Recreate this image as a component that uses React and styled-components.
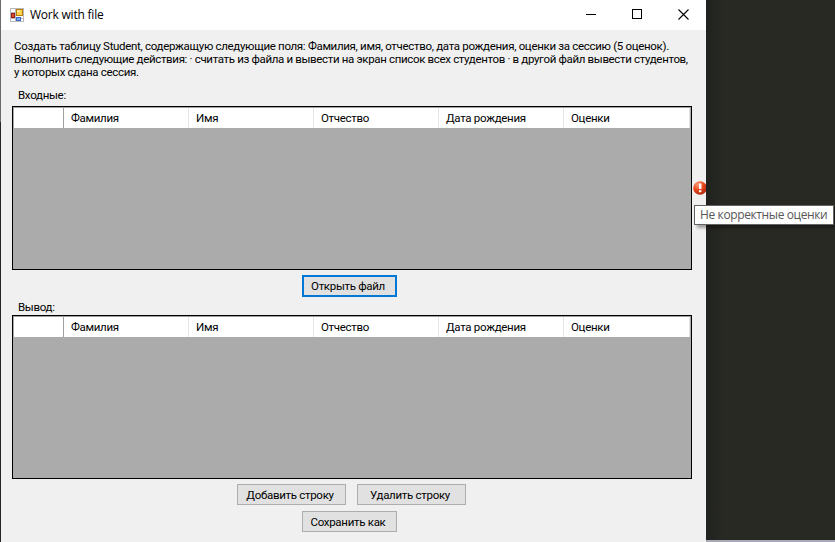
import React from "react";
import styled, { createGlobalStyle } from "styled-components";

const GlobalStyle = createGlobalStyle`
  * { box-sizing: border-box; }
  body { margin: 0; overflow: hidden; }
`;

const Desktop = styled.div`
  position: relative;
  display: flex;
  width: 835px;
  height: 542px;
  background: #282923;
  font-family: Roboto, "Liberation Sans", sans-serif;
  font-size: 11.5px;
  color: #000;
`;

const LeftEdge = styled.div`
  width: 1px;
  background: linear-gradient(#6b6b6b 0 122px, #25252a 122px);
`;

const Window = styled.main`
  display: flex;
  flex-direction: column;
  width: 705px;
  height: 542px;
  background: #f0f0f0;
`;

const Backdrop = styled.div`
  flex: 1;
  background: linear-gradient(90deg, #20221f, #282923 18px);
  border-bottom: 2px solid #a9a9b5;
`;

const TitleBar = styled.header`
  display: flex;
  align-items: center;
  height: 30px;
  padding-left: 9px;
  background: #fff;
`;

const Title = styled.h1`
  flex: 1;
  margin: 0 0 0 5px;
  font: 400 12px/16px "Open Sans", "Noto Sans", sans-serif;
  letter-spacing: -0.22px;
`;

const WindowButton = styled.button`
  display: flex;
  align-items: center;
  justify-content: center;
  width: 46px;
  height: 30px;
  padding: 0 0 2px;
  border: 0;
  background: none;
`;

const Line = styled.span`
  display: block;
  white-space: pre;
  letter-spacing: ${(p) => p.$spacing ?? -0.3}px;
`;

const Description = styled.p`
  height: 42px;
  margin: 10px 0 0 13px;
  line-height: 13px;
`;

const Label = styled.div`
  height: ${(p) => p.$height}px;
  margin-top: ${(p) => p.$top}px;
  padding-left: 17px;
  line-height: 13px;
`;

const Grid = styled.section`
  width: 680px;
  height: 164px;
  margin-left: 11px;
  border: 1px solid #000;
  background: #ababab;
`;

const HeaderRow = styled.div`
  display: grid;
  grid-template-columns: 50px 125px 125px 125px 125px 126px;
  width: 678px;
  height: 21px;
  padding-left: 1px;
  border-top: 1px solid #a0a0a0;
  border-bottom: 1px solid #a0a0a0;
`;

const HeaderCell = styled.div`
  padding-left: 7px;
  border-right: 1px solid ${(p) => (p.$corner ? "#a0a0a0" : "#e5e5e5")};
  background: #fff;
  line-height: 20px;
  white-space: nowrap;
`;

const ButtonRow = styled.div`
  display: flex;
  gap: 11px;
  margin: ${(p) => p.$top}px 0 0 ${(p) => p.$left}px;
`;

const Button = styled.button`
  display: flex;
  align-items: center;
  justify-content: center;
  width: ${(p) => p.$width}px;
  height: ${(p) => (p.$focused ? 22 : 21)}px;
  padding: 0 3px 0 0;
  border: ${(p) => (p.$focused ? "2px solid #0078d7" : "1px solid #adadad")};
  background: #e1e1e1;
  color: #000;
  font: inherit;
  white-space: nowrap;
`;

const ErrorMark = styled.div`
  position: absolute;
  left: 693px;
  top: 181px;
  width: 13px;
  height: 14px;
  overflow: hidden;
  svg { display: block; }
`;

const Tooltip = styled.div`
  position: absolute;
  left: 694px;
  top: 205px;
  width: 140px;
  height: 20px;
  padding-left: 5px;
  border: 1px solid #646464;
  background: #fff;
  box-shadow: 3px 3px 3px rgba(0, 0, 0, 0.35);
  color: #575757;
  font: 12px/18px "Open Sans", "Noto Sans", sans-serif;
`;

const AppIcon = () => (
  <svg width="15" height="15" viewBox="0 0 15 15" shapeRendering="crispEdges">
    <path d="M.5 .5h13v13H.5zM5.5 .5v13M.5 4.5h13M.5 10.5h13" fill="#fff" stroke="#b9b9b9" />
    <path d="M1.5 5.5h3v4h-3z" fill="#d64b36" stroke="#9b1d18" />
    <path d="M6.5 1.5h6v6h-6z" fill="#ffd24e" stroke="#b87e08" />
    <path d="M7 2h3v2H7z" fill="#ffe89a" />
    <path d="M6.5 9.5h4v3h-4z" fill="#79acf0" stroke="#396ac5" />
  </svg>
);

const columns = ["Фамилия", "Имя", "Отчество", "Дата рождения", "Оценки"];

const StudentGrid = () => (
  <Grid>
    <HeaderRow>
      <HeaderCell $corner />
      {columns.map((name) => (
        <HeaderCell key={name}><Line>{name}</Line></HeaderCell>
      ))}
    </HeaderRow>
  </Grid>
);

export default function App() {
  return (
    <Desktop>
      <GlobalStyle />
      <LeftEdge />
      <Window>
        <TitleBar>
          <AppIcon />
          <Title>Work with file</Title>
          <WindowButton aria-label="Minimize">
            <svg width="11" height="11" shapeRendering="crispEdges"><path d="M0 5.5h10" stroke="#000" /></svg>
          </WindowButton>
          <WindowButton aria-label="Maximize">
            <svg width="11" height="11" shapeRendering="crispEdges"><path d="M.5 .5h9v9h-9z" fill="none" stroke="#000" /></svg>
          </WindowButton>
          <WindowButton aria-label="Close">
            <svg width="11" height="11"><path d="M.5 .5l10 10M10.5 .5l-10 10" stroke="#000" strokeWidth="1.1" /></svg>
          </WindowButton>
        </TitleBar>
        <Description>
          <Line $spacing={-0.31}>Создать таблицу Student, содержащую следующие поля: Фамилия, имя, отчество, дата рождения, оценки за сессию (5 оценок).</Line>
          <Line $spacing={-0.34}>Выполнить следующие действия: · считать из файла и вывести на экран список всех студентов · в другой файл вывести студентов,</Line>
          <Line>у которых сдана сессия.</Line>
        </Description>
        <Label $top={7} $height={17}><Line>Входные:</Line></Label>
        <StudentGrid />
        <ButtonRow $top={5} $left={301}>
          <Button $width={95} $focused><Line>Открыть файл</Line></Button>
        </ButtonRow>
        <Label $top={4} $height={14}><Line>Вывод:</Line></Label>
        <StudentGrid />
        <ButtonRow $top={5} $left={236}>
          <Button $width={109}><Line>Добавить строку</Line></Button>
          <Button $width={109}><Line>Удалить строку</Line></Button>
        </ButtonRow>
        <ButtonRow $top={6} $left={301}>
          <Button $width={95}><Line>Сохранить как</Line></Button>
        </ButtonRow>
      </Window>
      <Backdrop />
      <ErrorMark>
        <svg width="15" height="14" viewBox="0 0 15 14">
          <defs>
            <radialGradient id="alert" cx=".35" cy=".25" r=".8">
              <stop offset="0" stopColor="#ff9a78" />
              <stop offset=".5" stopColor="#ea4a20" />
              <stop offset="1" stopColor="#a92008" />
            </radialGradient>
          </defs>
          <circle cx="7" cy="7" r="6.8" fill="url(#alert)" />
          <path d="M6 2.5h2.4v5.5H6zM6 9.3h2.4v2H6z" fill="#fff" />
        </svg>
      </ErrorMark>
      <Tooltip><Line $spacing={-0.38}>Не корректные оценки</Line></Tooltip>
    </Desktop>
  );
}
